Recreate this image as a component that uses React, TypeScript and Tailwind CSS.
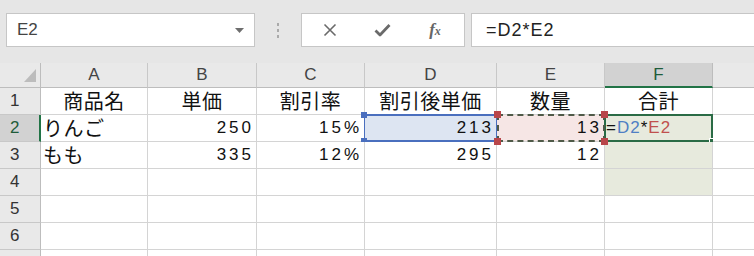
import React from 'react';

const FONT = { fontFamily: '"Liberation Sans", "Noto Sans CJK JP", sans-serif' };

const cols = ['A', 'B', 'C', 'D', 'E', 'F', 'G'];

const Jp: React.FC<{ children: React.ReactNode }> = ({ children }) => (
  <span className="text-[20px] tracking-[0.5px]" style={{ fontFamily: '"Noto Sans CJK JP", sans-serif' }}>
    {children}
  </span>
);

const Num: React.FC<{ children: React.ReactNode }> = ({ children }) => (
  <span className="text-[17px] tracking-[3px]">{children}</span>
);

const cellBase = 'relative h-[27px] border-r border-b border-[#d4d4d4] flex items-center overflow-visible text-[#111]';

const App: React.FC = () => {
  const data: Record<number, React.ReactNode[]> = {
    1: [<Jp>商品名</Jp>, <Jp>単価</Jp>, <Jp>割引率</Jp>, <Jp>割引後単価</Jp>, <Jp>数量</Jp>, <Jp>合計</Jp>, null],
    2: [<Jp>りんご</Jp>, <Num>250</Num>, <Num>15%</Num>, <Num>213</Num>, <Num>13</Num>, null, null],
    3: [<Jp>もも</Jp>, <Num>335</Num>, <Num>12%</Num>, <Num>295</Num>, <Num>12</Num>, null, null],
    4: [], 5: [], 6: [], 7: [],
  };

  const align = (r: number, c: number) => {
    if (r === 1) return 'justify-center';
    if (c === 0) return 'justify-start pl-[2px]';
    return 'justify-end pr-[2px]';
  };

  const bg = (r: number, c: number) => {
    if (r === 2 && c === 3) return 'bg-[#dde5f2]';
    if (r === 2 && c === 4) return 'bg-[#f6e6e5]';
    if (c === 5 && r >= 2 && r <= 4) return 'bg-[#e7eadd]';
    return 'bg-white';
  };

  return (
    <div className="w-[754px] h-[256px] overflow-hidden bg-[#e6e6e6] select-none" style={FONT}>
      {/* formula bar */}
      <div className="flex items-start pt-[13px] h-[63px]">
        <div className="ml-[6px] w-[249px] h-[34px] bg-white border border-[#c6c6c6] flex items-center justify-between pl-[10px] pr-[10px]">
          <span className="text-[17px] text-[#444]">E2</span>
          <svg width="9" height="5" viewBox="0 0 9 5"><path d="M0 0h9L4.5 5z" fill="#6e6e6e" /></svg>
        </div>
        <div className="w-[46px] h-[34px] flex flex-col items-center justify-center gap-[3px]">
          <span className="w-[2px] h-[3px] bg-[#aaa]" />
          <span className="w-[2px] h-[3px] bg-[#aaa]" />
          <span className="w-[2px] h-[3px] bg-[#aaa]" />
        </div>
        <div className="w-[164px] h-[34px] bg-white border border-[#c6c6c6] flex items-center">
          <div className="w-[56px] flex justify-center">
            <svg width="14" height="14" viewBox="0 0 14 14"><path d="M1.5 1.5l11 11M12.5 1.5l-11 11" stroke="#6a6a6a" strokeWidth="1.6" /></svg>
          </div>
          <div className="w-[48px] flex justify-center">
            <svg width="17" height="14" viewBox="0 0 17 14"><path d="M1.5 7.5l4.5 4.5L15.5 2" stroke="#6a6a6a" strokeWidth="2.8" fill="none" strokeLinejoin="round" /></svg>
          </div>
          <div className="w-[58px] flex justify-center">
            <span className="italic text-[#666] text-[17px] font-bold" style={{ fontFamily: '"Liberation Serif", serif' }}>f<span className="text-[12px]">x</span></span>
          </div>
        </div>
        <div className="ml-[6px] flex-1 h-[34px] bg-white border border-[#c6c6c6] border-r-0 flex items-center pl-[14px]">
          <span className="text-[18px] text-[#222] tracking-[1px]">=D2*E2</span>
        </div>
      </div>

      {/* grid */}
      <div className="grid grid-cols-[41px_107px_109px_108px_132px_108px_108px_108px]">
        {/* header row */}
        <div className="h-[25px] bg-[#e9e9e9] border-r border-b border-[#bdbdbd] flex items-end justify-end pr-[4px] pb-[5px]">
          <svg width="12" height="13" viewBox="0 0 12 13"><path d="M12 0v13H0z" fill="#bcbcbc" /></svg>
        </div>
        {cols.map((c) => (
          <div
            key={c}
            className={`h-[25px] flex items-center justify-center text-[17px] border-r ${
              c === 'F'
                ? 'bg-[#d2d2d2] text-[#1e5c3a] border-b-2 border-b-[#217346] border-r-[#bdbdbd]'
                : 'bg-[#e9e9e9] text-[#444] border-b border-[#bdbdbd] border-r-[#c8c8c8]'
            }`}
          >
            {c === 'G' ? null : c}
          </div>
        ))}

        {[1, 2, 3, 4, 5, 6, 7].map((r) => (
          <React.Fragment key={r}>
            <div
              className={`h-[27px] flex items-center pl-[10px] text-[17px] border-b border-[#c8c8c8] ${
                r === 2
                  ? 'bg-[#d2d2d2] text-[#1e5c3a] border-r-2 border-r-[#217346]'
                  : 'bg-[#e9e9e9] text-[#333] border-r border-r-[#bdbdbd]'
              }`}
            >
              {r < 7 ? r : null}
            </div>
            {cols.map((c, ci) => (
              <div key={c} className={`${cellBase} ${align(r, ci)} ${bg(r, ci)}`}>
                {data[r][ci] ?? null}

                {r === 2 && ci === 3 && (
                  <div className="absolute left-[-1px] right-[-1px] top-[-1px] bottom-[-1px] border-y-2 border-x border-[#4a6fbe] pointer-events-none">
                    <span className="absolute left-[-4px] top-[-4px] w-[6px] h-[6px] bg-[#4a6fbe]" />
                    <span className="absolute left-[-4px] bottom-[-4px] w-[6px] h-[6px] bg-[#4a6fbe]" />
                  </div>
                )}
                {r === 2 && ci === 4 && (
                  <div className="absolute left-[0px] right-[-1px] top-[-1px] bottom-[-1px] border-2 border-dashed border-[#4f5a48] pointer-events-none z-10">
                    <span className="absolute left-[-5px] top-[-5px] w-[7px] h-[7px] bg-[#b8464a]" />
                    <span className="absolute left-[-5px] bottom-[-5px] w-[7px] h-[7px] bg-[#b8464a]" />
                    <span className="absolute right-[-5px] top-[-5px] w-[7px] h-[7px] bg-[#b8464a]" />
                    <span className="absolute right-[-5px] bottom-[-5px] w-[7px] h-[7px] bg-[#b8464a]" />
                  </div>
                )}
                {r === 2 && ci === 5 && (
                  <>
                    <div className="absolute left-[1px] top-0 flex items-center h-full text-[17px] tracking-[1px]">
                      <span className="text-[#111]">=</span>
                      <span className="text-[#4f7fc4]">D2</span>
                      <span className="text-[#111]">*</span>
                      <span className="text-[#c0504d]">E2</span>
                    </div>
                    <div className="absolute left-[-1px] right-[-1px] top-[-1px] bottom-[-1px] border-2 border-[#2a6b45] pointer-events-none">
                      <span className="absolute right-[-5px] bottom-[-5px] w-[7px] h-[7px] bg-[#2a6b45] border border-white" />
                    </div>
                  </>
                )}
              </div>
            ))}
          </React.Fragment>
        ))}
      </div>
    </div>
  );
};

export default App;
